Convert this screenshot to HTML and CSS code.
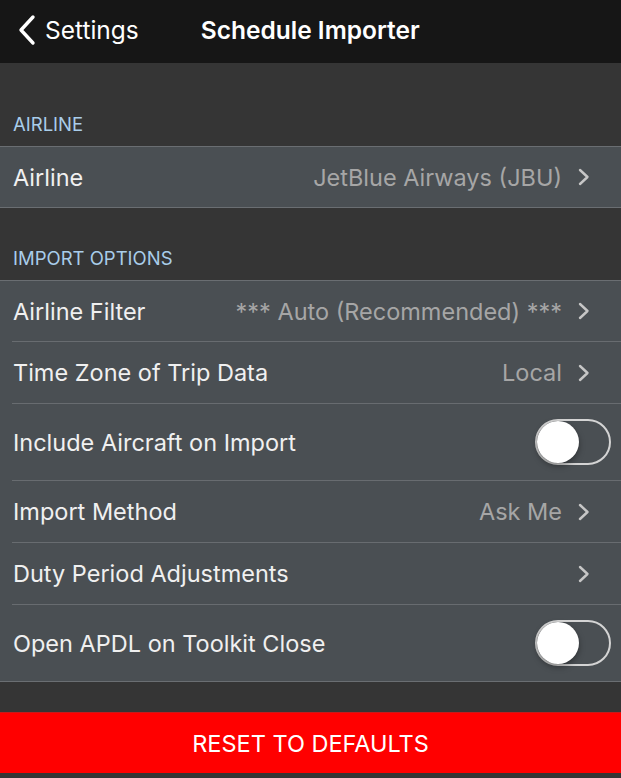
FILE: index.html
```html
<!DOCTYPE html>
<html>
<head>
<meta charset="utf-8">
<link rel="stylesheet" href="styles.css">
</head>
<body>
<div class="screen">
  <header class="nav">
    <div class="back">
      <svg class="back-icon" width="20" height="32" viewBox="0 0 20 32"><path d="M16 3 L4 16 L16 29" fill="none" stroke="#fff" stroke-width="3.4" stroke-linecap="round" stroke-linejoin="round"/></svg>
      <span>Settings</span>
    </div>
    <div class="title">Schedule Importer</div>
  </header>

  <div class="section-head first">AIRLINE</div>
  <div class="group">
    <div class="row">
      <span class="label">Airline</span>
      <span class="value">JetBlue Airways (JBU)</span>
      <svg class="chev" width="12" height="18" viewBox="0 0 12 18"><path d="M2 2 L9.5 9 L2 16" fill="none" stroke="#c6c6c6" stroke-width="2.4" stroke-linecap="round" stroke-linejoin="round"/></svg>
    </div>
  </div>

  <div class="section-head">IMPORT OPTIONS</div>
  <div class="group">
    <div class="row">
      <span class="label">Airline Filter</span>
      <span class="value">*** Auto (Recommended) ***</span>
      <svg class="chev" width="12" height="18" viewBox="0 0 12 18"><path d="M2 2 L9.5 9 L2 16" fill="none" stroke="#c6c6c6" stroke-width="2.4" stroke-linecap="round" stroke-linejoin="round"/></svg>
    </div>
    <div class="row">
      <span class="label">Time Zone of Trip Data</span>
      <span class="value">Local</span>
      <svg class="chev" width="12" height="18" viewBox="0 0 12 18"><path d="M2 2 L9.5 9 L2 16" fill="none" stroke="#c6c6c6" stroke-width="2.4" stroke-linecap="round" stroke-linejoin="round"/></svg>
    </div>
    <div class="row tall">
      <span class="label">Include Aircraft on Import</span>
      <span class="switch"><span class="knob"></span></span>
    </div>
    <div class="row">
      <span class="label">Import Method</span>
      <span class="value">Ask Me</span>
      <svg class="chev" width="12" height="18" viewBox="0 0 12 18"><path d="M2 2 L9.5 9 L2 16" fill="none" stroke="#c6c6c6" stroke-width="2.4" stroke-linecap="round" stroke-linejoin="round"/></svg>
    </div>
    <div class="row">
      <span class="label">Duty Period Adjustments</span>
      <span class="value"></span>
      <svg class="chev" width="12" height="18" viewBox="0 0 12 18"><path d="M2 2 L9.5 9 L2 16" fill="none" stroke="#c6c6c6" stroke-width="2.4" stroke-linecap="round" stroke-linejoin="round"/></svg>
    </div>
    <div class="row tall">
      <span class="label">Open APDL on Toolkit Close</span>
      <span class="switch"><span class="knob"></span></span>
    </div>
  </div>

  <div class="reset">RESET TO DEFAULTS</div>
</div>
</body>
</html>
```

FILE: styles.css
```css
* { box-sizing: border-box; }
html, body {
  margin: 0;
  padding: 0;
  background: #353535;
  font-family: Inter, Roboto, "Noto Sans", sans-serif;
}
.screen {
  width: 621px;
  height: 778px;
  overflow: hidden;
  background: #353535;
}
.nav {
  height: 63px;
  padding-bottom: 4px;
  background: #161616;
  display: flex;
  align-items: center;
  color: #fff;
}
.back {
  display: flex;
  align-items: center;
  gap: 8px;
  padding-left: 17px;
  font-size: 24.5px;
}
.title {
  margin-left: 62px;
  font-size: 24.5px;
  font-weight: 600;
}
.section-head {
  height: 72px;
  padding: 0 13px 11px;
  display: flex;
  align-items: flex-end;
  font-size: 18.5px;
  color: #a9cdea;
}
.section-head.first {
  height: 83px;
}
.group {
  background: #4a4f53;
  border-top: 1px solid #6a6e72;
  border-bottom: 1px solid #6a6e72;
}
.row {
  height: 60px;
  display: flex;
  align-items: center;
  padding: 0 31px 0 13px;
  position: relative;
  font-size: 23.5px;
}
.row + .row {
  height: 62px;
  padding-top: 1px;
}
.row + .row::before {
  content: "";
  position: absolute;
  left: 12px;
  right: 0;
  top: 0;
  height: 1px;
  background: #686c70;
}
.row.tall {
  height: 77px;
  padding-right: 10px;
}
.label {
  color: #f0f0f0;
  flex: 1;
}
.value {
  color: #a6a6a6;
  margin-right: 16px;
}
.chev { display: block; }
.switch {
  width: 76px;
  height: 46px;
  border-radius: 23px;
  border: 2px solid #d4d4d4;
  position: relative;
  display: block;
}
.knob {
  position: absolute;
  left: 0;
  top: 0;
  width: 42px;
  height: 42px;
  border-radius: 50%;
  background: #fff;
  box-shadow: 0 3px 6px rgba(0,0,0,0.35), 0 0 1px rgba(0,0,0,0.3);
}
.reset {
  margin-top: 30px;
  height: 61px;
  background: #ff0000;
  border-top: 1px solid #c81a1a;
  color: #fff;
  font-size: 23.5px;
  display: flex;
  align-items: center;
  justify-content: center;
}
```
